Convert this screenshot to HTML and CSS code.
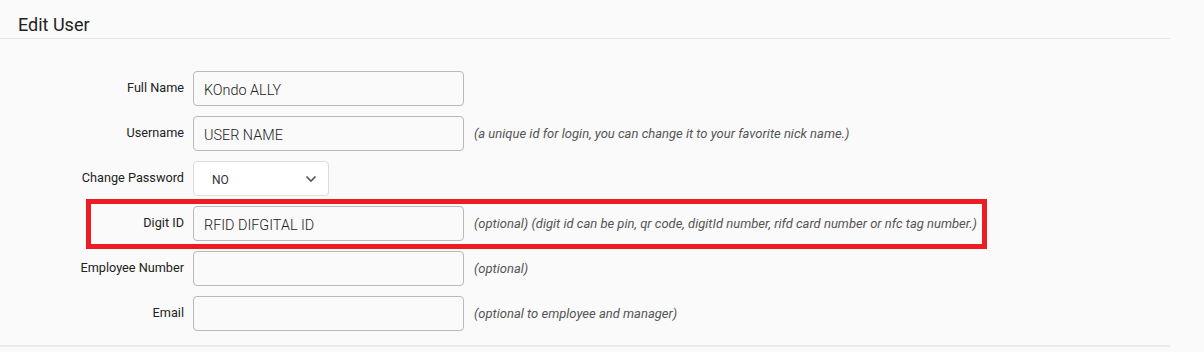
FILE: index.html
```html
<!DOCTYPE html>
<html lang="en">
<head>
    <meta charset="UTF-8">
    <title>Edit User</title>
    <link rel="stylesheet" href="styles.css">
</head>
<body>

<div class="panel">
    <div class="panel-head">
        <h2>Edit User</h2>
    </div>

    <form class="user-form">
        <div class="form-row">
            <label for="fullname">Full Name</label>
            <input type="text" id="fullname" value="KOndo ALLY">
        </div>

        <div class="form-row">
            <label for="username">Username</label>
            <input type="text" id="username" value="USER NAME">
            <span class="hint">(a unique id for login, you can change it to your favorite nick name.)</span>
        </div>

        <div class="form-row">
            <label for="changepw">Change Password</label>
            <div class="select-wrap">
                <select id="changepw">
                    <option>NO</option>
                    <option>YES</option>
                </select>
                <svg class="chevron" width="12" height="8" viewBox="0 0 12 8">
                    <path d="M1.5 1.5 L6 6 L10.5 1.5" fill="none" stroke="#555" stroke-width="1.6"/>
                </svg>
            </div>
        </div>

        <div class="form-row">
            <label for="digitid">Digit ID</label>
            <input type="text" id="digitid" value="RFID DIFGITAL ID">
            <span class="hint">(optional) (digit id can be pin, qr code, digitId number, rifd card number or nfc tag number.)</span>
        </div>

        <div class="form-row">
            <label for="empno">Employee Number</label>
            <input type="text" id="empno">
            <span class="hint">(optional)</span>
        </div>

        <div class="form-row">
            <label for="email">Email</label>
            <input type="text" id="email">
            <span class="hint">(optional to employee and manager)</span>
        </div>

        <div class="highlight"></div>
    </form>
</div>

</body>
</html>
```

FILE: styles.css
```css
body {
    font-family: Roboto, 'Noto Sans', sans-serif;
    margin: 0;
    padding: 0;
    background: #fafafa;
    color: #333;
}

.panel {
    width: 1170px;
    border-bottom: 2px solid #ececec;
    padding-bottom: 14px;
}

.panel-head {
    height: 38px;
    border-bottom: 1px solid #e6e6e6;
    padding-left: 18px;
    display: flex;
    align-items: flex-end;
}

.panel-head h2 {
    margin: 0 0 3px;
    font-size: 18px;
    font-weight: 400;
    color: #222;
}

.user-form {
    position: relative;
    padding-top: 32px;
    display: flex;
    flex-direction: column;
    gap: 10px;
}

.form-row {
    display: flex;
    align-items: center;
    height: 35px;
}

.form-row label {
    width: 184px;
    text-align: right;
    font-size: 12.7px;
    color: #222;
    margin-right: 9px;
    margin-top: -3px;
}

.form-row input {
    box-sizing: border-box;
    width: 271px;
    height: 35px;
    padding: 4px 10px 0;
    font-family: Roboto, sans-serif;
    font-size: 14.4px;
    font-weight: 300;
    color: #222;
    background: #fafafa;
    border: 1px solid #b9b9b9;
    border-radius: 4px;
}

.select-wrap {
    position: relative;
    width: 136px;
    height: 35px;
}

.select-wrap select {
    appearance: none;
    box-sizing: border-box;
    width: 100%;
    height: 100%;
    padding: 3px 18px 0;
    font-family: Roboto, sans-serif;
    font-size: 12px;
    color: #333;
    background: #fff;
    border: 1px solid #dcdcdc;
    border-radius: 4px;
}

.chevron {
    position: absolute;
    right: 12px;
    top: 14px;
}

.hint {
    margin-left: 10px;
    font-size: 13px;
    font-style: italic;
    color: #555;
}

.highlight {
    position: absolute;
    left: 86px;
    top: 160px;
    width: 891px;
    height: 40px;
    border: 5px solid #ed1c24;
}
```
